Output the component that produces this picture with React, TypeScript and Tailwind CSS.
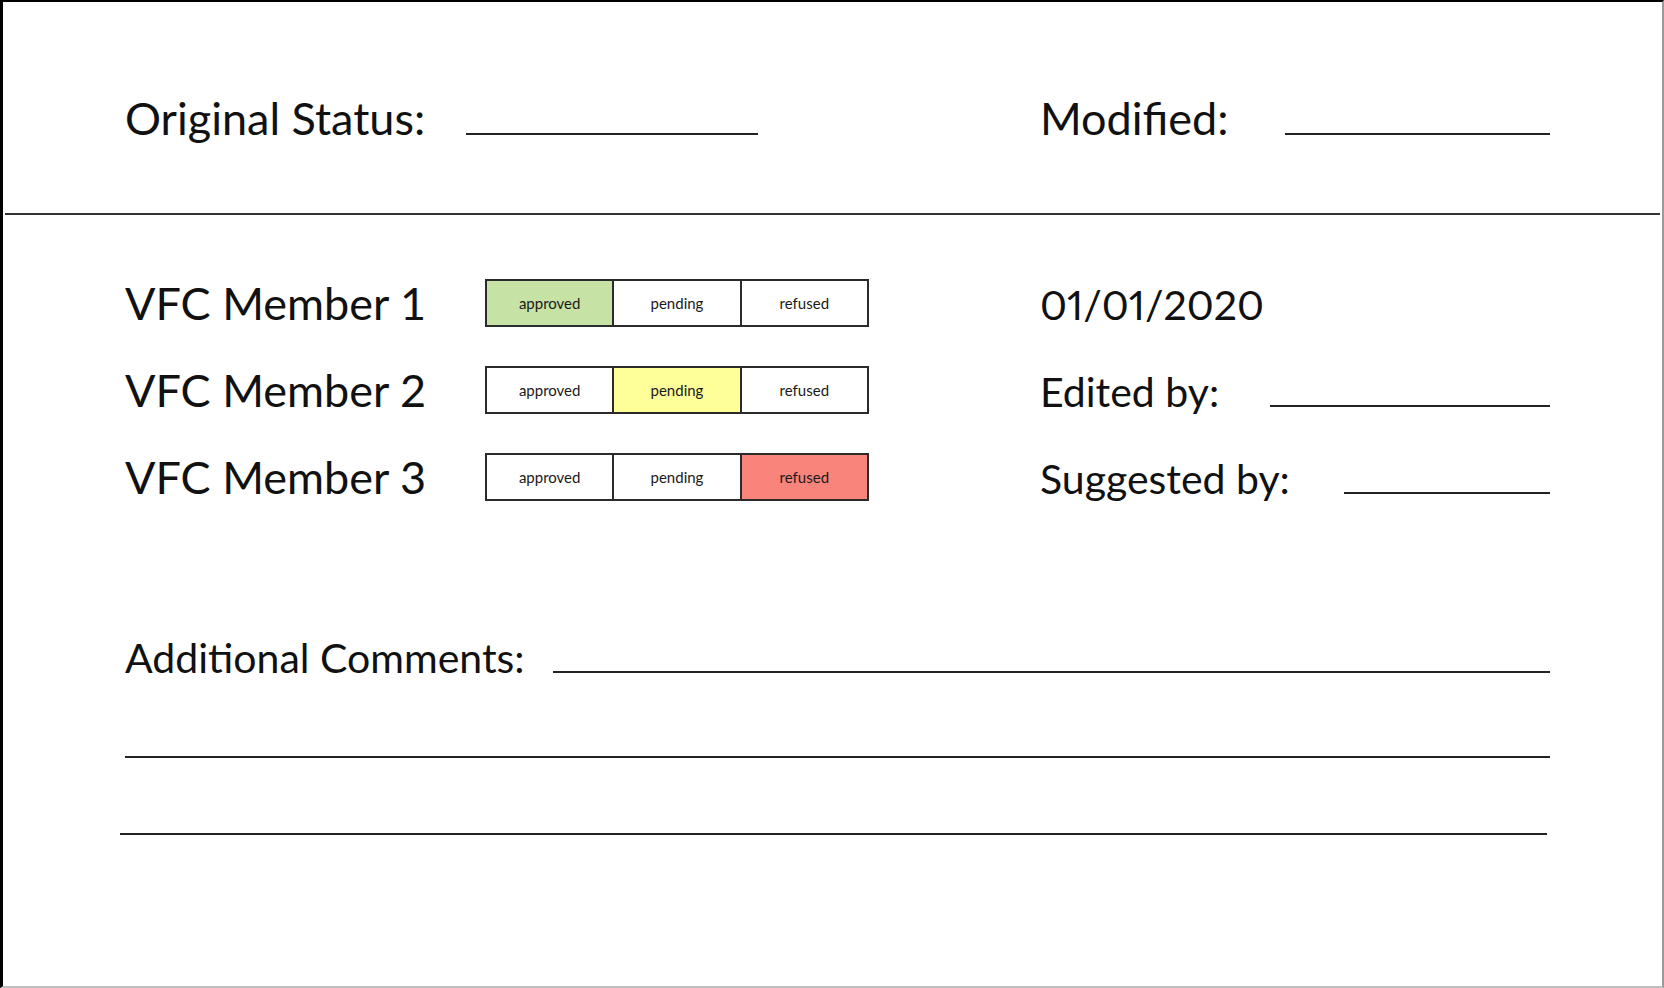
import React from "react";

type Status = "approved" | "pending" | "refused";

const members: { name: string; status: Status }[] = [
  { name: "VFC Member 1", status: "approved" },
  { name: "VFC Member 2", status: "pending" },
  { name: "VFC Member 3", status: "refused" },
];

const activeBg: Record<Status, string> = {
  approved: "bg-[#c6e2a4]",
  pending: "bg-[#ffff99]",
  refused: "bg-[#f8847c]",
};

const StatusToggle = ({ value }: { value: Status }) => {
  const options: Status[] = ["approved", "pending", "refused"];
  return (
    <div className="flex w-[384px] h-[48px] border-2 border-[#2b2b2b]">
      {options.map((opt, i) => (
        <div
          key={opt}
          className={`flex-1 flex items-center justify-center text-[15px] text-[#1a1a1a] ${
            i > 0 ? "border-l-2 border-[#2b2b2b]" : ""
          } ${value === opt ? activeBg[opt] : "bg-white"}`}
        >
          {opt}
        </div>
      ))}
    </div>
  );
};

// blank to write on
const Blank = ({ className = "" }: { className?: string }) => (
  <div className={`h-[2px] bg-[#222] ${className}`} />
);

export default function App() {
  return (
    <div
      className="w-full h-[988px] bg-white text-[#111] border-t-2 border-l-[3px] border-black border-r-2 border-b-2 border-r-[#9a9a9a] border-b-[#bdbdbd]"
      style={{ fontFamily: "Lato, 'Noto Sans', sans-serif" }}
    >
      {/* header */}
      <div className="h-[211px] pl-[122px] pr-[112px] pt-[94px] flex items-baseline text-[45px] leading-none">
        <div className="w-[915px] flex items-baseline">
          <span>Original Status:</span>
          <Blank className="ml-[41px] w-[292px]" />
        </div>
        <span>Modified:</span>
        <Blank className="ml-[56px] flex-1" />
      </div>
      <div className="mx-[2px] h-[2px] bg-[#333]" />

      {/* members */}
      <div className="pl-[122px] pr-[112px] pt-[64px] flex flex-col gap-[39px]">
        {members.map((m, i) => (
          <div key={m.name} className="flex items-center h-[48px] text-[45px] leading-none">
            <span className="w-[360px]">{m.name}</span>
            <StatusToggle value={m.status} />
            <div className="ml-[171px] flex-1 flex items-baseline text-[41px] pt-[3px]">
              {i === 0 && <span className="proportional-nums">01/01/2020</span>}
              {i === 1 && (
                <>
                  <span>Edited by:</span>
                  <Blank className="ml-[51px] flex-1" />
                </>
              )}
              {i === 2 && (
                <>
                  <span>Suggested by:</span>
                  <Blank className="ml-[54px] flex-1" />
                </>
              )}
            </div>
          </div>
        ))}
      </div>

      {/* comments */}
      <div className="pl-[122px] pr-[112px] pt-[136px] text-[41px] leading-none">
        <div className="flex items-baseline">
          <span>Additional Comments:</span>
          <Blank className="ml-[28px] flex-1" />
        </div>
        <Blank className="mt-[78px]" />
        <Blank className="mt-[75px] -ml-[5px] mr-[3px]" />
      </div>
    </div>
  );
}
